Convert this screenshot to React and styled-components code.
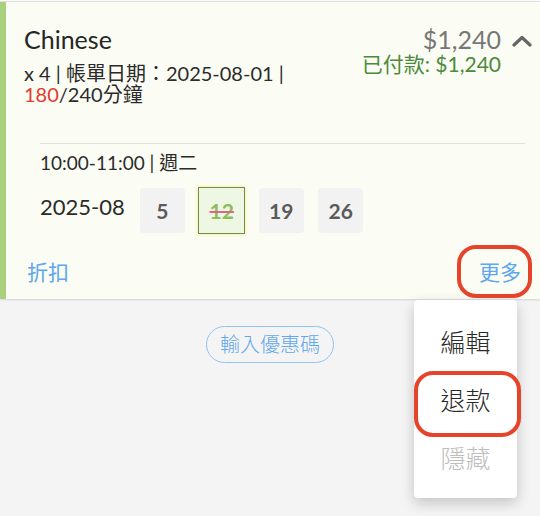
import React from "react"
import styled, { createGlobalStyle } from "styled-components"

const GlobalStyle = createGlobalStyle`
  html, body {
    margin: 0;
    padding: 0;
    background: #f4f4f4;
  }
  body {
    font-family: Lato, "Noto Sans CJK TC", "Noto Sans", sans-serif;
    color: #2b2b2b;
  }
`

const Page = styled.div`
  position: relative;
  width: 540px;
  height: 516px;
  overflow: hidden;
`

const Frame = styled.div`
  margin-top: 1px;
  border-top: 1px solid #e2e2e2;
  box-shadow: 0 -1px 0 #fafafa;
`

const Card = styled.div`
  background: #fbfdf4;
  border-left: 6px solid #a9d07c;
  padding: 22px 7px 0 18px;
  box-shadow: 0 1px 2px rgba(0, 0, 0, 0.14);
`

const Header = styled.div`
  display: flex;
  justify-content: space-between;
  align-items: flex-start;
`

const Title = styled.div`
  font-size: 25px;
  line-height: 30px;
  color: #262626;
`

const Info = styled.div`
  margin-top: 9px;
  font-size: 20px;
  line-height: 21px;
  color: #2b2b2b;
`

const Used = styled.span`
  color: #e63a2e;
`

const PriceArea = styled.div`
  display: flex;
  align-items: flex-start;
`

const PriceCol = styled.div`
  text-align: right;
`

const Price = styled.div`
  font-size: 25px;
  line-height: 30px;
  color: #777;
`

const Paid = styled.div`
  margin-top: -2px;
  font-size: 21px;
  line-height: 24px;
  color: #4b8b3b;
`

const Chevron = styled.svg`
  margin: 11px 0 0 10px;
  flex-shrink: 0;
`

const DateSection = styled.div`
  margin: 38px 8px 0 16px;
  border-top: 1px solid #e0e0e0;
  padding-top: 7px;
`

const DateHeader = styled.div`
  font-size: 19px;
  line-height: 24px;
  color: #2b2b2b;
`

const DateRow = styled.div`
  display: flex;
  align-items: center;
  margin-top: 13px;
  height: 45px;
`

const Year = styled.div`
  font-size: 22px;
  line-height: 26px;
  margin: 0 15px 7px 0;
  color: #2b2b2b;
`

const Day = styled.div`
  box-sizing: border-box;
  width: ${(p) => (p.$picked ? 47 : 45)}px;
  height: ${(p) => (p.$picked ? 47 : 45)}px;
  margin: 0 ${(p) => (p.$picked ? 13.5 : 14.5)}px 0 ${(p) => (p.$picked ? -1 : 0)}px;
  display: flex;
  align-items: center;
  justify-content: center;
  border-radius: ${(p) => (p.$picked ? 0 : 4)}px;
  background: ${(p) => (p.$picked ? "#eef6e4" : "#f2f2f2")};
  border: ${(p) => (p.$picked ? "1px solid #6f8f3e" : "none")};
  box-shadow: ${(p) => (p.$picked ? "0 0 4px rgba(255, 205, 70, 0.55)" : "none")};
  font-size: 21px;
  font-weight: 700;
  color: ${(p) => (p.$picked ? "#8fbd5c" : "#5a5a5a")};
  text-decoration: ${(p) => (p.$picked ? "line-through" : "none")};
  text-decoration-color: #e0658d;
  text-decoration-thickness: 2px;
`

const Footer = styled.div`
  display: flex;
  justify-content: space-between;
  margin: 25px 12px 0 3px;
  padding-bottom: 13px;
`

const LinkButton = styled.div`
  font-size: 21px;
  line-height: 28px;
  color: #5ea6ee;
`

const Below = styled.div`
  display: flex;
  justify-content: center;
  padding-top: 27px;
`

const Pill = styled.div`
  border: 1px solid #92c3f1;
  border-radius: 20px;
  padding: 0 13px;
  font-size: 20px;
  line-height: 35px;
  font-weight: 300;
  color: #61a7ee;
`

const Menu = styled.div`
  position: absolute;
  left: 414px;
  top: 300px;
  width: 103px;
  padding: 12px 0;
  background: #fff;
  border-radius: 4px;
  box-shadow: 0 5px 14px rgba(0, 0, 0, 0.2);
`

const MenuItem = styled.div`
  height: 58px;
  display: flex;
  align-items: center;
  justify-content: center;
  font-size: 25px;
  font-weight: 300;
  color: ${(p) => (p.$disabled ? "#bdbdbd" : "#2a2a2a")};
`

const Mark = styled.div`
  position: absolute;
  box-sizing: border-box;
  border: 4px solid #e6432b;
  border-radius: 19px;
`

const days = [
  { d: 5 },
  { d: 12, picked: true },
  { d: 19 },
  { d: 26 },
]

export default function App() {
  return (
    <Page>
      <GlobalStyle />
      <Frame>
        <Card>
          <Header>
            <div>
              <Title>Chinese</Title>
              <Info>
                <div>x 4 | 帳單日期：2025-08-01 |</div>
                <div>
                  <Used>180</Used>/240分鐘
                </div>
              </Info>
            </div>
            <PriceArea>
              <PriceCol>
                <Price>$1,240</Price>
                <Paid>已付款: $1,240</Paid>
              </PriceCol>
              <Chevron width="22" height="12" viewBox="0 0 22 12">
                <polyline
                  points="3,10 11,2.5 19,10"
                  fill="none"
                  stroke="#666"
                  strokeWidth="3.2"
                  strokeLinecap="round"
                  strokeLinejoin="round"
                />
              </Chevron>
            </PriceArea>
          </Header>

          <DateSection>
            <DateHeader>10:00-11:00 | 週二</DateHeader>
            <DateRow>
              <Year>2025-08</Year>
              {days.map((x) => (
                <Day key={x.d} $picked={x.picked}>
                  {x.d}
                </Day>
              ))}
            </DateRow>
          </DateSection>

          <Footer>
            <LinkButton>折扣</LinkButton>
            <LinkButton>更多</LinkButton>
          </Footer>
        </Card>
      </Frame>

      <Below>
        <Pill>輸入優惠碼</Pill>
      </Below>

      <Menu>
        <MenuItem>編輯</MenuItem>
        <MenuItem>退款</MenuItem>
        <MenuItem $disabled>隱藏</MenuItem>
      </Menu>

      <Mark style={{ left: 457, top: 245, width: 75, height: 53 }} />
      <Mark style={{ left: 414, top: 371, width: 107, height: 66 }} />
    </Page>
  )
}
